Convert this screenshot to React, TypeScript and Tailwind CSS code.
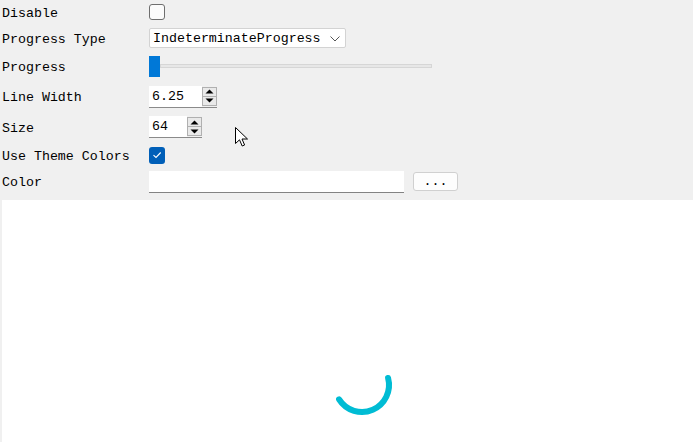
import React from "react";

const mono = { fontFamily: '"Liberation Mono", "DejaVu Sans Mono", monospace' };

function Row({ label, h, children }: { label: string; h: string; children: React.ReactNode }) {
  return (
    <div className={`flex items-center ${h}`}>
      <div className="w-[149px] pl-[2px] pt-[3px] text-[13.3px] leading-none text-black">{label}</div>
      <div className="flex items-center">{children}</div>
    </div>
  );
}

function Spin({ value, w }: { value: string; w: string }) {
  return (
    <div className={`flex h-[22px] ${w} border-b border-[#8a8a8a] bg-white`}>
      <div className="flex flex-1 items-center pl-[3px] pt-[1px] text-[13.3px] leading-none">{value}</div>
      <div className="flex w-[15px] flex-col bg-[#f0f0f0] py-[1px]">
        <div className="flex flex-1 items-center justify-center border border-[#b0b0b0] bg-[#e9e9e9]">
          <svg width="9" height="5" viewBox="0 0 9 5">
            <path d="M0.5 4.5 L4.5 0.5 L8.5 4.5 Z" fill="#000" />
          </svg>
        </div>
        <div className="flex flex-1 items-center justify-center border border-t-0 border-[#b0b0b0] bg-[#e9e9e9]">
          <svg width="9" height="5" viewBox="0 0 9 5">
            <path d="M0.5 0.5 L4.5 4.5 L8.5 0.5 Z" fill="#000" />
          </svg>
        </div>
      </div>
    </div>
  );
}

export default function App() {
  return (
    <div className="relative flex h-[442px] w-[693px] flex-col overflow-hidden bg-[#f0f0f0]" style={mono}>
      <Row label="Disable" h="h-[25px]">
        <div className="mt-[-1px] h-[16px] w-[16px] rounded-[3px] border border-[#6e6e6e] bg-[#fbfbfb]" />
      </Row>
      <Row label="Progress Type" h="h-[26px]">
        <div className="flex h-[20px] w-[197px] items-center justify-between rounded-[2px] border border-[#d3d3d3] bg-white pl-[3px] pr-[5px] pt-[1px] text-[13.3px] leading-none">
          <span>IndeterminateProgress</span>
          <svg width="10" height="6" viewBox="0 0 10 6">
            <path d="M0.5 0.5 L5 5 L9.5 0.5" fill="none" stroke="#555" strokeWidth="1" />
          </svg>
        </div>
      </Row>
      <Row label="Progress" h="h-[30px]">
        <div className="flex items-center">
          <div className="h-[21px] w-[11px] bg-[#0078d7]" />
          <div className="h-[4px] w-[272px] border border-[#d6d6d6] bg-[#e7e7e7]" />
        </div>
      </Row>
      <Row label="Line Width" h="h-[31px]">
        <Spin value="6.25" w="w-[68px]" />
      </Row>
      <Row label="Size" h="h-[30px]">
        <Spin value="64" w="w-[53px]" />
      </Row>
      <Row label="Use Theme Colors" h="h-[26px]">
        <div className="flex h-[17px] w-[16px] items-center justify-center rounded-[3px] bg-[#005fb8]">
          <svg width="10" height="8" viewBox="0 0 10 8">
            <path d="M1.5 4.2 L4 6.5 L8.7 1.5" fill="none" stroke="#fff" strokeWidth="1.1" />
          </svg>
        </div>
      </Row>
      <Row label="Color" h="h-[27px]">
        <div className="h-[22px] w-[255px] border-b border-[#838383] bg-white" />
        <div className="ml-[9px] flex h-[19px] w-[45px] items-center justify-center rounded-[3px] border border-[#d0d0d0] bg-[#fdfdfd] text-[13.3px] leading-none">
          ...
        </div>
      </Row>
      <div className="mt-[5px] ml-[2px] flex-1 bg-white pl-[328px] pt-[153px]">
        <svg width="64" height="64" viewBox="-32 -32 64 64">
          <path
            d="M26.08 -6.99 A27 27 0 0 1 -22.9 14.3"
            fill="none"
            stroke="#00bcd4"
            strokeWidth="6"
            strokeLinecap="round"
          />
        </svg>
      </div>
      <svg className="absolute left-[235px] top-[127px]" width="14" height="21" viewBox="0 0 14 21">
        <path d="M0.5 0.5 L0.5 16.5 L4.5 12.8 L7.2 19 L9.6 18 L7 12 L12.5 12 Z" fill="#fff" stroke="#000" strokeWidth="1" />
      </svg>
    </div>
  );
}
